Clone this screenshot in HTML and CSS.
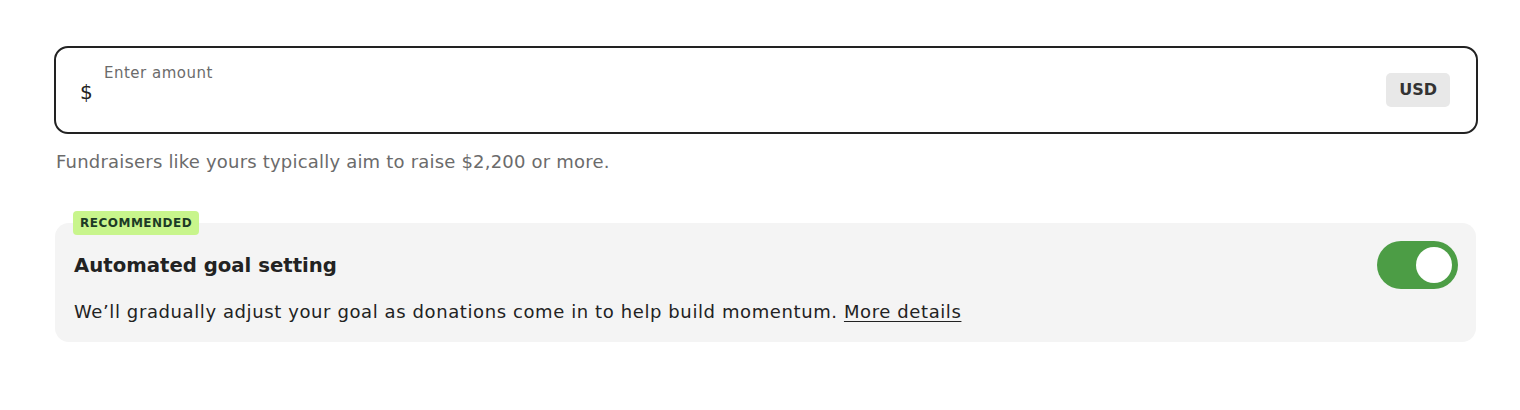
FILE: index.html
```html
<!DOCTYPE html>
<html>
<head>
<meta charset="utf-8">
<link rel="stylesheet" href="styles.css">
</head>
<body>
<div class="wrap">
  <div class="amount">
    <span class="currency">$</span>
    <div class="field">
      <span class="label">Enter amount</span>
    </div>
    <span class="usd">USD</span>
  </div>
  <p class="hint">Fundraisers like yours typically aim to raise $2,200 or more.</p>
  <div class="rec">
    <span class="badge">RECOMMENDED</span>
    <div class="card">
      <div class="card-text">
        <h3 class="title">Automated goal setting</h3>
        <p class="desc">We’ll gradually adjust your goal as donations come in to help build momentum. <a class="more" href="#">More details</a></p>
      </div>
      <div class="toggle"><span class="knob"></span></div>
    </div>
  </div>
</div>
</body>
</html>
```
FILE: styles.css
```css
* { box-sizing: border-box; }
html, body { margin: 0; padding: 0; background: #fff; }
body { font-family: "DejaVu Sans", "Open Sans", sans-serif; color: #222; }
.wrap { margin: 46px 0 0 54px; width: 1424px; }
.amount {
  height: 88px;
  border: 2px solid #222;
  border-radius: 14px;
  display: flex;
  align-items: center;
  padding: 0 26px 0 24px;
}
.currency { font-size: 20px; color: #222; margin-top: 4px; width: 24px; }
.field { flex: 1; align-self: stretch; padding-top: 15px; }
.label { font-size: 15px; color: #6b6b6b; letter-spacing: 0.5px; }
.usd {
  background: #e8e8e8;
  border-radius: 5px;
  font-weight: 700;
  font-size: 16px;
  color: #333;
  padding: 7px 13px;
  line-height: 20px;
}
.hint { margin: 16px 0 0 2px; font-size: 18px; color: #6b6b6b; line-height: 24px; letter-spacing: 0.2px; }
.rec { position: relative; padding-top: 12px; margin-top: 37px; }
.badge {
  position: absolute;
  left: 19px;
  top: 0;
  background: #c8f58c;
  color: #1d3b26;
  font-weight: 700;
  font-size: 12px;
  letter-spacing: 0.5px;
  padding: 5px 7px 4px;
  line-height: 15px;
  border-radius: 4px;
}
.card {
  margin: 0 2px 0 1px;
  background: #f4f4f4;
  border-radius: 14px;
  display: flex;
  align-items: flex-start;
  padding: 18px 18px 17px 19px;
  min-height: 119px;
}
.card-text { flex: 1; padding-top: 12px; }
.title { margin: 0; font-size: 19.7px; font-weight: 700; line-height: 26px; color: #222; }
.desc { margin: 21px 0 0; font-size: 18px; line-height: 24px; color: #222; letter-spacing: 0.6px; }
.more { color: #222; text-decoration: underline; text-underline-offset: 3px; }
.toggle {
  width: 81px;
  height: 48px;
  border-radius: 24px;
  background: #4c9d45;
  position: relative;
  flex: none;
}
.knob {
  position: absolute;
  right: 6px;
  top: 6px;
  width: 36px;
  height: 36px;
  border-radius: 50%;
  background: #fff;
}
```
